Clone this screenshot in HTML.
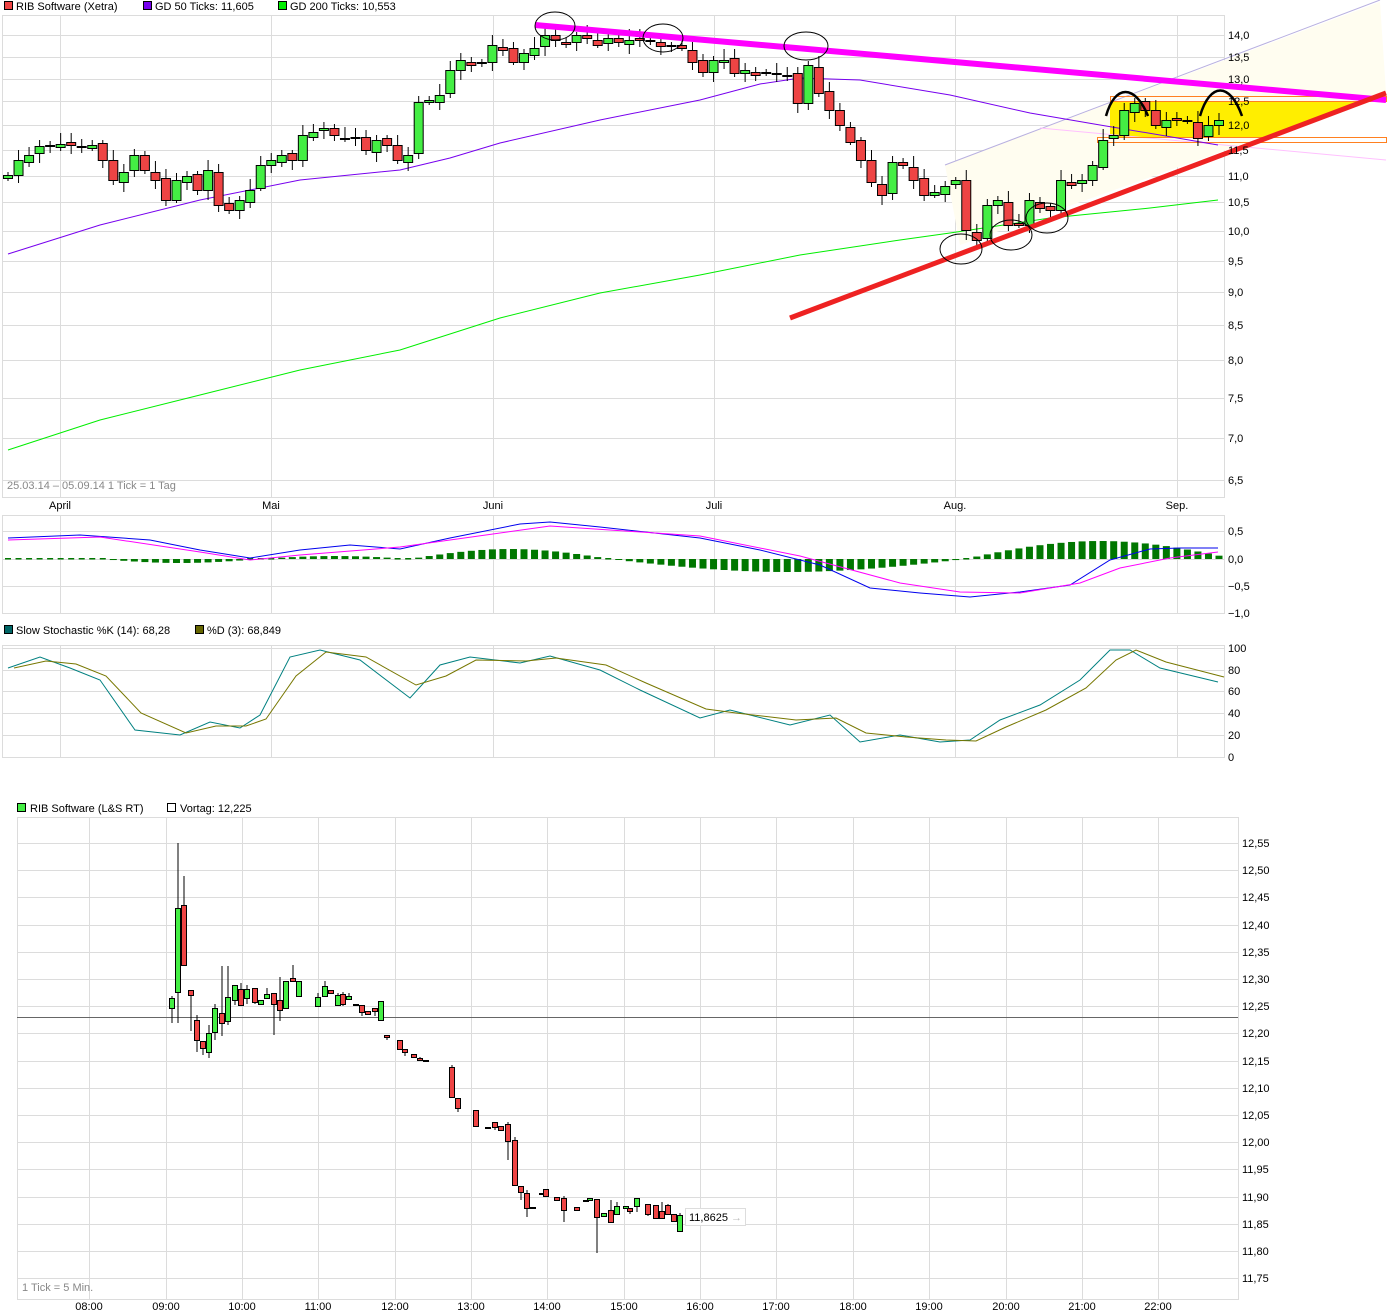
<!DOCTYPE html>
<html><head><meta charset="utf-8"><style>
html,body{margin:0;padding:0;background:#fff;}
svg{display:block;font-family:"Liberation Sans",sans-serif;font-size:11px;}
</style></head><body>
<svg id="s" width="1398" height="1314" viewBox="0 0 1398 1314" xmlns="http://www.w3.org/2000/svg">
<rect width="1398" height="1314" fill="#fff"/>
<!-- legends -->
<rect x="4.5" y="1.5" width="8" height="8" fill="#ee4444" stroke="#000"/>
<text x="16" y="10">RIB Software (Xetra)</text>
<rect x="143.5" y="1.5" width="8" height="8" fill="#7700ee" stroke="#000"/>
<text x="155" y="10">GD 50 Ticks: 11,605</text>
<rect x="278.5" y="1.5" width="8" height="8" fill="#00ee00" stroke="#000"/>
<text x="290" y="10">GD 200 Ticks: 10,553</text>
<rect x="4.5" y="625.5" width="8" height="8" fill="#006666" stroke="#000"/>
<text x="16" y="634">Slow Stochastic %K (14): 68,28</text>
<rect x="195.5" y="625.5" width="8" height="8" fill="#666600" stroke="#000"/>
<text x="207" y="634">%D (3): 68,849</text>
<rect x="17.5" y="803.5" width="8" height="8" fill="#44ee44" stroke="#000"/>
<text x="30" y="812">RIB Software (L&amp;S RT)</text>
<rect x="167.5" y="803.5" width="8" height="8" fill="#fff" stroke="#000"/>
<text x="180" y="812">Vortag: 12,225</text>
<g id="grid" stroke="#dcdcdc" stroke-width="1" fill="none"></g>
<g id="top"></g>
<g id="lbl" fill="#000"></g>
</svg>
<script>
var S=document.getElementById('s'),G=document.getElementById('grid'),T=document.getElementById('top'),L=document.getElementById('lbl');
var NS='http://www.w3.org/2000/svg';
function el(p,n,a,t){var e=document.createElementNS(NS,n);for(var k in a)e.setAttribute(k,a[k]);if(t!=null)e.textContent=t;p.appendChild(e);return e;}
function txt(x,y,s,anchor,col){el(L,'text',{x:x,y:y,'text-anchor':anchor||'start',fill:col||'#000'},s);}
// panels
var vx=[60,271,493,714,955,1177];
function panel(x1,y1,x2,y2,hy){el(G,'rect',{x:x1+.5,y:y1+.5,width:x2-x1,height:y2-y1});hy.forEach(function(y){el(G,'line',{x1:x1,y1:y+.5,x2:x2,y2:y+.5});});}
var py=[35,57,79,101,125,150,176,202,231,261,292,325,360,398,438,480];
var pl=['14,0','13,5','13,0','12,5','12,0','11,5','11,0','10,5','10,0','9,5','9,0','8,5','8,0','7,5','7,0','6,5'];
panel(2,15,1224,497,py);
vx.forEach(function(x){el(G,'line',{x1:x+.5,y1:15,x2:x+.5,y2:497});});
panel(2,515,1224,613,[531,559,586]);
vx.forEach(function(x){el(G,'line',{x1:x+.5,y1:515,x2:x+.5,y2:613});});
panel(2,645,1224,757,[648,670,691,713,735]);
vx.forEach(function(x){el(G,'line',{x1:x+.5,y1:645,x2:x+.5,y2:757});});
var iy=[],il=[];for(var i=0;i<17;i++){iy.push(Math.round(843+i*27.2));il.push((12.55-i*0.05).toFixed(2).replace('.',','));}
panel(17,817,1238,1299,iy);
var ix=[89,166,242,318,395,471,547,624,700,776,853,929,1006,1082,1158];
var it=['08:00','09:00','10:00','11:00','12:00','13:00','14:00','15:00','16:00','17:00','18:00','19:00','20:00','21:00','22:00'];
ix.forEach(function(x,i){el(G,'line',{x1:x+.5,y1:817,x2:x+.5,y2:1299});txt(x,1310,it[i],'middle');});
py.forEach(function(y,i){txt(1228,y+4,pl[i]);});
[['0,5',531],['0,0',559],['\u22120,5',586],['\u22121,0',613]].forEach(function(a){txt(1228,a[1]+4,a[0]);});
[['100',648],['80',670],['60',691],['40',713],['20',735],['0',757]].forEach(function(a){txt(1228,a[1]+4,a[0]);});
iy.forEach(function(y,i){txt(1242,y+4,il[i]);});
['April','Mai','Juni','Juli','Aug.','Sep.'].forEach(function(m,i){txt(vx[i],509,m,'middle');});
txt(7,489,'25.03.14 \u2013 05.09.14    1 Tick = 1 Tag','start','#888');
txt(22,1291,'1 Tick = 5 Min.','start','#888');
// background annotations
el(T,'polygon',{points:'945,165 1380,2 1386,93 960,245',fill:'#fffdf0'});
el(T,'polygon',{points:'1110,101 1365,101 1265,137 1110,137',fill:'#ffee00'});
el(T,'line',{x1:945,y1:165,x2:1380,y2:0,stroke:'#b8b0e0'});
el(T,'line',{x1:1040,y1:128,x2:1386,y2:160,stroke:'#ffc0ff'});
el(T,'rect',{x:1110.5,y:96.5,width:276,height:5,fill:'none',stroke:'#ff8020'});
el(T,'rect',{x:1097.5,y:137.5,width:289,height:5,fill:'none',stroke:'#ff8020'});
// moving averages
function pline(pts,c,w){el(T,'polyline',{points:pts,fill:'none',stroke:c,'stroke-width':w||1});}
pline('8,254 100,225 200,200 300,180 400,170 450,158 500,143 600,120 700,100 760,84 800,78 860,80 950,95 1030,113 1100,125 1160,135 1218,145','#7700ee');
pline('8,450 100,420 200,395 300,370 400,350 500,318 600,293 700,275 800,255 900,240 950,233 1050,218 1150,208 1218,200','#00ee00');
// daily candles (close y)
var C=[175,160,155,146,145,144,145,146,145,160,180,172,155,170,180,200,180,176,190,170,205,210,200,190,165,160,155,160,135,132,128,135,138,137,150,140,145,160,155,102,100,95,70,60,65,62,45,50,62,53,48,35,40,44,35,38,45,38,42,40,40,40,46,45,48,62,72,60,60,73,70,75,72,73,75,103,65,93,110,125,142,160,182,195,162,165,180,195,192,186,180,230,240,205,200,225,225,200,208,210,180,185,180,165,140,135,110,103,110,125,120,120,120,138,125,120];
var sp=(1219-8)/(C.length-1);
for(var i=0;i<C.length;i++){var x=8+i*sp,o=i?C[i-1]+((i%3)-1)*2:178,c=C[i];if(Math.abs(o-c)<2)o=c+1;var hi=Math.min(o,c)-3-(i*7%9),lo=Math.max(o,c)+3+(i*5%8);
el(T,'line',{x1:x,y1:hi,x2:x,y2:lo,stroke:'#000'});
el(T,'rect',{x:x-4.5,y:Math.min(o,c)+.5,width:9,height:Math.max(1,Math.abs(o-c)),fill:c<o?'#44ee44':'#ee4444',stroke:'#000'});}
// trend lines & ellipses
el(T,'line',{x1:535,y1:25,x2:1386,y2:100,stroke:'#ff00ff','stroke-width':6});
el(T,'line',{x1:790,y1:318,x2:1386,y2:93,stroke:'#ee2222','stroke-width':5});
[[555,26,20,14],[663,38,20,14],[806,46,22,14],[961,249,21,15],[1011,235,21,15],[1047,218,21,15]].forEach(function(e){el(T,'ellipse',{cx:e[0],cy:e[1],rx:e[2],ry:e[3],fill:'none',stroke:'#000'});});
el(T,'path',{d:'M1106,116 C1115,84 1135,84 1148,116',fill:'none',stroke:'#000','stroke-width':2.5});
el(T,'path',{d:'M1200,116 C1210,82 1230,82 1242,116',fill:'none',stroke:'#000','stroke-width':2.5});
// MACD histogram
var H=[];for(var i=0;i<C.length;i++){var x=8+i*sp,v;
if(x<100)v=0.5;else if(x<260)v=-4*Math.sin((x-100)/160*Math.PI);else if(x<410)v=3*Math.sin((x-260)/150*Math.PI);else if(x<610)v=10*Math.sin((x-410)/200*Math.PI);else if(x<965)v=-13*Math.sin((x-610)/355*Math.PI);else v=18*Math.sin((x-965)/270*Math.PI);
if(Math.abs(v)<1)el(T,'rect',{x:x-3,y:558,width:6,height:1.5,fill:'#007700'});else el(T,'rect',{x:x-3.5,y:v>0?559-v:559,width:7,height:Math.abs(v),fill:'#007700'});}
pline('8,538 80,535 150,540 200,550 250,558 300,550 350,545 400,549 450,538 520,524 550,522 600,527 700,538 760,550 820,565 870,588 920,593 970,597 1020,592 1070,585 1110,560 1150,549 1180,548 1218,548','#0000ee');
pline('8,540 100,537 200,552 250,560 300,555 400,547 450,540 550,526 700,536 800,556 900,583 960,592 1020,593 1080,583 1120,568 1170,558 1218,552','#ff00ff');
// stochastic
var K=[[8,668],[40,657],[70,668],[100,680],[135,730],[180,735],[210,722],[240,728],[260,715],[290,657],[320,650],[360,660],[410,698],[440,665],[470,657],[520,663],[550,656],[600,670],[640,690],[700,718],[730,710],[790,725],[830,715],[860,742],[900,735],[940,742],[970,740],[1000,720],[1040,705],[1080,680],[1110,650],[1130,650],[1160,668],[1218,682]];
pline(K.map(function(p){return p.join(',');}).join(' '),'#008080');
pline(K.map(function(p,i){var q=i?K[i-1]:p;return (p[0]+6)+','+Math.round((p[1]*2+q[1])/3);}).join(' '),'#777700');
// intraday
function Y(p){return 843+(12.55-p)*543.75;}
el(T,'line',{x1:17,y1:1017.5,x2:1238,y2:1017.5,stroke:'#666'});
var I=[[172,1008,998,996,1023],[178,992,908,843,1023],[184,905,965,876,965],[191,990,995,990,1031],[197,1020,1040,1015,1052],[203,1041,1048,1041,1055],[209,1052,1033,1025,1058],[215,1032,1008,1004,1040],[222,1013,1023,966,1036],[228,1021,997,966,1025],[235,1000,985,985,1005],[241,989,1005,983,1006],[247,998,989,985,1004],[255,988,1002,988,1004],[261,1004,1000,1000,1004],[267,998,994,988,998],[274,993,1004,993,1035],[280,1000,1010,977,1021],[286,1008,981,981,1008],[293,978,981,965,981],[299,996,981,981,996],[318,1006,997,993,1006],[325,996,986,981,996],[331,990,993,990,993],[338,1005,995,993,1005],[343,994,1004,992,1006],[349,999,996,993,999],[356,1004,1005,1004,1005],[362,1005,1012,1005,1016],[368,1011,1014,1011,1014],[375,1008,1011,1008,1016],[381,1020,1001,1001,1020],[387,1035,1037,1035,1040],[400,1040,1049,1040,1049],[405,1049,1052,1049,1056],[414,1054,1057,1054,1058],[420,1058,1060,1057,1061],[426,1060,1061,1060,1061],[452,1067,1097,1065,1097],[458,1098,1108,1098,1112],[476,1110,1126,1110,1126],[488,1127,1128,1127,1128],[495,1122,1127,1122,1130],[501,1126,1130,1126,1130],[508,1124,1141,1122,1160],[515,1140,1185,1137,1185],[521,1186,1192,1186,1200],[527,1193,1208,1190,1217],[533,1207,1208,1207,1208],[542,1193,1194,1193,1194],[546,1189,1196,1189,1196],[557,1197,1200,1197,1200],[564,1198,1210,1196,1222],[577,1207,1210,1207,1210],[586,1200,1201,1200,1201],[590,1200,1198,1198,1200],[597,1199,1217,1199,1253],[604,1216,1213,1213,1216],[611,1210,1222,1200,1222],[617,1214,1206,1202,1214],[626,1208,1206,1206,1208],[630,1208,1211,1208,1214],[637,1206,1198,1198,1212],[648,1204,1214,1204,1216],[656,1205,1218,1205,1218],[662,1211,1218,1202,1218],[668,1205,1214,1204,1214],[674,1214,1221,1214,1221],[680,1231,1215,1213,1231]];
I.forEach(function(c){el(T,'line',{x1:c[0],y1:c[3],x2:c[0],y2:c[4],stroke:'#000'});el(T,'rect',{x:c[0]-2.5,y:Math.min(c[1],c[2])+.5,width:5,height:Math.max(1,Math.abs(c[1]-c[2])),fill:c[2]<c[1]?'#44ee44':'#ee4444',stroke:'#000'});});
el(T,'rect',{x:685.5,y:1208.5,width:60,height:17,fill:'#fff',stroke:'#ddd'});
txt(689,1221,'11,8625');
el(T,'text',{x:731,y:1221,fill:'#bbb'},'\u2192');
</script>
</body></html>
